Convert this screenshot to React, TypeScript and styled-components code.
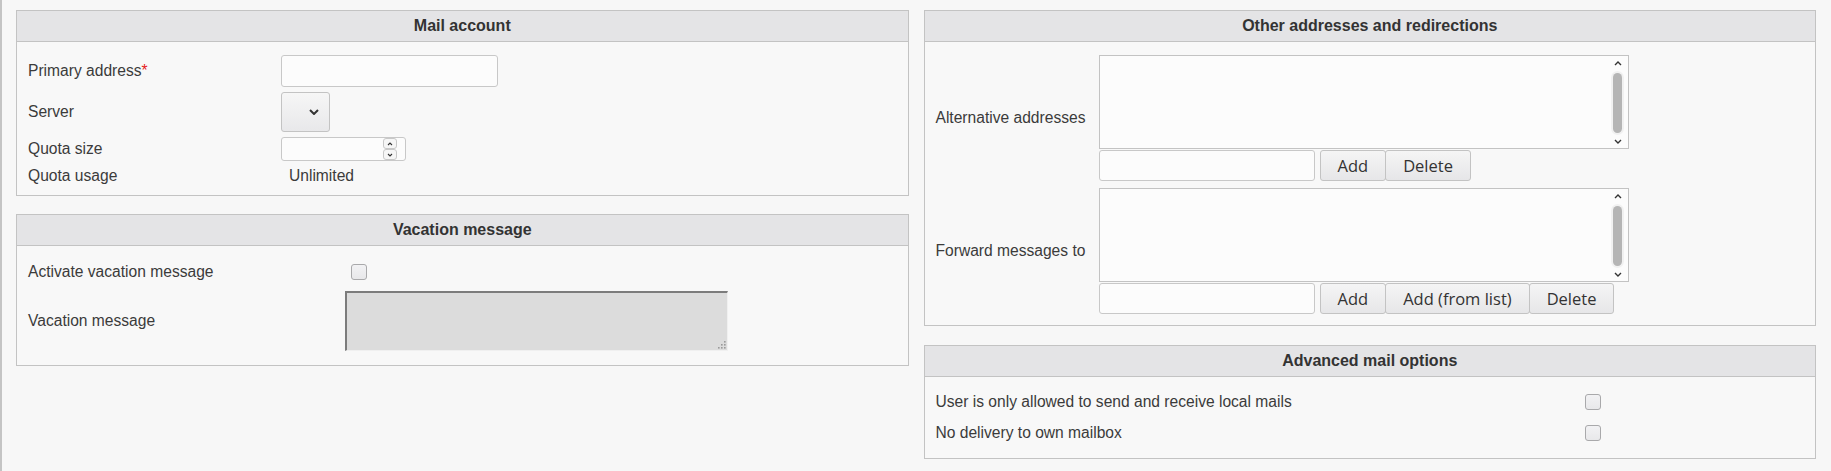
import styled, { createGlobalStyle } from 'styled-components';

const GlobalStyle = createGlobalStyle`
    html, body {
        margin: 0;
        padding: 0;
        background: #f7f7f7;
    }
    body {
        font-family: "Liberation Sans", Arial, sans-serif;
        color: #333;
    }
`;

const Page = styled.div`
    min-height: 100vh;
    box-sizing: border-box;
    border-left: 2px solid #c4c4c4;
    padding: 10px 15px 0 14px;
    display: grid;
    grid-template-columns: 1fr 1fr;
    column-gap: 15px;
    align-items: start;
`;

const Column = styled.div<{ $gap: number }>`
    display: flex;
    flex-direction: column;
    gap: ${(p) => p.$gap}px;
`;

const Panel = styled.section`
    border: 1px solid #c3c3c3;
    background: #f8f8f8;
`;

const PanelTitle = styled.h2`
    margin: 0;
    height: 30px;
    line-height: 30px;
    background: #e4e4e6;
    border-bottom: 1px solid #c3c3c3;
    text-align: center;
    font-size: 16px;
    font-weight: bold;
    color: #333;
`;

const FormGrid = styled.div<{ $label: number; $gap: number; $pad: string }>`
    display: grid;
    grid-template-columns: ${(p) => p.$label}px 1fr;
    row-gap: ${(p) => p.$gap}px;
    padding: ${(p) => p.$pad};
    align-items: center;
`;

const Label = styled.div`
    font-size: 15.6px;
    line-height: 20px;
    color: #3b3b3b;
    white-space: nowrap;
`;

const Required = styled.span`
    color: #e52020;
`;

const Value = styled.div`
    font-size: 15.6px;
    line-height: 20px;
    color: #3b3b3b;
    padding-left: 8px;
`;

const TextInput = styled.div<{ $w: number; $h: number }>`
    width: ${(p) => p.$w}px;
    height: ${(p) => p.$h}px;
    box-sizing: border-box;
    border: 1px solid #c8c8c8;
    border-radius: 3px;
    background: #fcfcfc;
`;

const Select = styled.div`
    width: 49px;
    height: 40px;
    box-sizing: border-box;
    border: 1px solid #c3c3c3;
    border-radius: 3px;
    background: linear-gradient(#f6f6f6, #e8e8ea);
    display: flex;
    align-items: center;
    justify-content: flex-end;
    padding-right: 10px;
`;

const NumberInput = styled.div`
    width: 125px;
    height: 24px;
    box-sizing: border-box;
    border: 1px solid #c8c8c8;
    border-radius: 3px;
    background: #fcfcfc;
    display: flex;
    justify-content: flex-end;
    padding-right: 8px;
`;

const Spinner = styled.div`
    width: 14px;
    display: flex;
    flex-direction: column;
    justify-content: center;
`;

const SpinButton = styled.div`
    height: 11px;
    box-sizing: border-box;
    border: 1px solid #c8c8c8;
    border-radius: 3px;
    background: #f6f6f6;
    display: flex;
    align-items: center;
    justify-content: center;
`;

const Checkbox = styled.div<{ $offset?: number }>`
    width: 16px;
    height: 16px;
    box-sizing: border-box;
    margin-left: ${(p) => p.$offset ?? 0}px;
    border: 1px solid #a9a9ab;
    border-radius: 3px;
    background: linear-gradient(#f2f2f4, #e8e8ea);
`;

const DisabledText = styled.div`
    position: relative;
    width: 383px;
    height: 60px;
    box-sizing: border-box;
    background: #dcdcdc;
    border-top: 2px solid #7c7c7c;
    border-left: 2px solid #7c7c7c;
    border-right: 1px solid #f0f0f0;
    border-bottom: 1px solid #f0f0f0;
`;

const Grip = styled.svg`
    position: absolute;
    right: 1px;
    bottom: 1px;
`;

const Control = styled.div`
    display: flex;
    flex-direction: column;
    gap: 1px;
`;

const ListBox = styled.div`
    width: 530px;
    height: 94px;
    box-sizing: border-box;
    border: 1px solid #c3c3c3;
    background: #fcfcfc;
    display: flex;
    justify-content: flex-end;
`;

const ScrollTrack = styled.div`
    width: 16px;
    margin-right: 2px;
    display: flex;
    flex-direction: column;
    align-items: center;
    padding: 5px 0 4px;
`;

const Thumb = styled.div`
    flex: 1;
    width: 9px;
    margin: 7px 0 6px;
    border-radius: 5px;
    background: #b5b5b5;
    box-shadow: 0 0 0 2px #f1f1f1;
`;

const InputRow = styled.div`
    display: flex;
    align-items: center;
`;

const ButtonGroup = styled.div`
    display: flex;
    margin-left: 5px;
`;

const Button = styled.button`
    height: 31px;
    box-sizing: border-box;
    padding: 0 17px;
    border: 1px solid #c3c3c3;
    border-radius: 3px;
    background: linear-gradient(#f5f5f5, #e6e6e8);
    font-family: "Open Sans", "Noto Sans", sans-serif;
    font-size: 16.5px;
    color: #333;
    & + & {
        margin-left: -1px;
    }
`;

const Chevron = ({ up, w = 8, h = 5, sw = 1.4 }: { up?: boolean; w?: number; h?: number; sw?: number }) => (
    <svg width={w} height={h} viewBox={`0 0 ${w} ${h}`}>
        <path
            d={up ? `M1 ${h - 1} L${w / 2} 1 L${w - 1} ${h - 1}` : `M1 1 L${w / 2} ${h - 1} L${w - 1} 1`}
            fill="none"
            stroke="#333"
            strokeWidth={sw}
        />
    </svg>
);

const AddressList = ({ buttons }: { buttons: string[] }) => (
    <Control>
        <ListBox>
            <ScrollTrack>
                <Chevron up />
                <Thumb />
                <Chevron />
            </ScrollTrack>
        </ListBox>
        <InputRow>
            <TextInput $w={216} $h={31} />
            <ButtonGroup>
                {buttons.map((b) => (
                    <Button key={b}>{b}</Button>
                ))}
            </ButtonGroup>
        </InputRow>
    </Control>
);

const App = () => {
    return (
        <>
            <GlobalStyle />
            <Page>
                <Column $gap={18}>
                    <Panel>
                        <PanelTitle>Mail account</PanelTitle>
                        <FormGrid $label={253} $gap={5} $pad="13px 11px 9px">
                            <Label>
                                Primary address<Required>*</Required>
                            </Label>
                            <TextInput $w={217} $h={32} />
                            <Label>Server</Label>
                            <Select>
                                <Chevron w={10} h={6} sw={2} />
                            </Select>
                            <Label>Quota size</Label>
                            <NumberInput>
                                <Spinner>
                                    <SpinButton>
                                        <Chevron up w={6} h={4} sw={1.1} />
                                    </SpinButton>
                                    <SpinButton>
                                        <Chevron w={6} h={4} sw={1.1} />
                                    </SpinButton>
                                </Spinner>
                            </NumberInput>
                            <Label>Quota usage</Label>
                            <Value>Unlimited</Value>
                        </FormGrid>
                    </Panel>
                    <Panel>
                        <PanelTitle>Vacation message</PanelTitle>
                        <FormGrid $label={317} $gap={9} $pad="16px 11px 14px">
                            <Label>Activate vacation message</Label>
                            <Checkbox $offset={6} />
                            <Label>Vacation message</Label>
                            <DisabledText>
                                <Grip width="8" height="8" viewBox="0 0 8 8">
                                    {[
                                        [6, 0],
                                        [3, 3],
                                        [6, 3],
                                        [0, 6],
                                        [3, 6],
                                        [6, 6],
                                    ].map(([x, y]) => (
                                        <rect key={`${x}-${y}`} x={x} y={y} width="1.6" height="1.6" fill="#9a9a9a" />
                                    ))}
                                </Grip>
                            </DisabledText>
                        </FormGrid>
                    </Panel>
                </Column>
                <Column $gap={19}>
                    <Panel>
                        <PanelTitle>Other addresses and redirections</PanelTitle>
                        <FormGrid $label={163} $gap={7} $pad="13px 11px 11px">
                            <Label>Alternative addresses</Label>
                            <AddressList buttons={['Add', 'Delete']} />
                            <Label>Forward messages to</Label>
                            <AddressList buttons={['Add', 'Add (from list)', 'Delete']} />
                        </FormGrid>
                    </Panel>
                    <Panel>
                        <PanelTitle>Advanced mail options</PanelTitle>
                        <FormGrid $label={649} $gap={11} $pad="15px 11px 15px">
                            <Label>User is only allowed to send and receive local mails</Label>
                            <Checkbox />
                            <Label>No delivery to own mailbox</Label>
                            <Checkbox />
                        </FormGrid>
                    </Panel>
                </Column>
            </Page>
        </>
    );
};

export default App;
